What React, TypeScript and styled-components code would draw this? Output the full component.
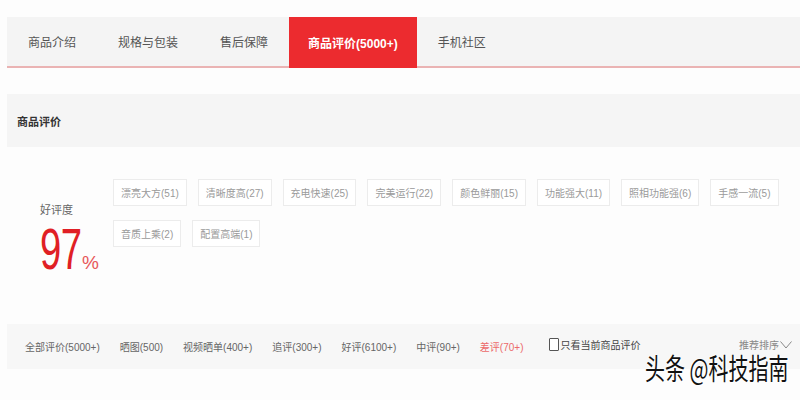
import React, { FC } from 'react';
import styled, { createGlobalStyle } from 'styled-components';

const GlobalStyle = createGlobalStyle`
  html, body {
    margin: 0;
    padding: 0;
    background: #fdfdfd;
    font-family: "Liberation Sans", "Noto Sans CJK SC", sans-serif;
    color: #666;
  }
`;

const tabs = ['商品介绍', '规格与包装', '售后保障', '商品评价(5000+)', '手机社区'];
const activeTab = 3;

const tags = [
  '漂亮大方(51)',
  '清晰度高(27)',
  '充电快速(25)',
  '完美运行(22)',
  '颜色鲜丽(15)',
  '功能强大(11)',
  '照相功能强(6)',
  '手感一流(5)',
  '音质上乘(2)',
  '配置高端(1)',
];

const filters = [
  { label: '全部评价(5000+)' },
  { label: '晒图(500)' },
  { label: '视频晒单(400+)' },
  { label: '追评(300+)' },
  { label: '好评(6100+)' },
  { label: '中评(90+)' },
  { label: '差评(70+)', bad: true },
];

const App: FC = () => (
  <Page>
    <GlobalStyle />
    <TabBar>
      {tabs.map((t, i) => (
        <Tab key={t} active={i === activeTab}>
          {t}
        </Tab>
      ))}
    </TabBar>

    <SectionHeader>商品评价</SectionHeader>

    <Summary>
      <Rate>
        <RateLabel>好评度</RateLabel>
        <RateValue>
          <Big>97</Big>
          <Percent>%</Percent>
        </RateValue>
      </Rate>
      <Tags>
        {tags.map((t) => (
          <TagItem key={t}>{t}</TagItem>
        ))}
      </Tags>
    </Summary>

    <FilterBar>
      {filters.map((f) => (
        <Filter key={f.label} bad={f.bad}>
          {f.label}
        </Filter>
      ))}
      <OnlyCurrent>
        <Box />
        只看当前商品评价
      </OnlyCurrent>
      <Sort>
        推荐排序
        <svg width="12" height="8" viewBox="0 0 12 8">
          <path d="M0.5 0.5 L6 7 L11.5 0.5" fill="none" stroke="#888" strokeWidth="1" />
        </svg>
      </Sort>
    </FilterBar>

    <Watermark>
      <WatermarkText>头条 @科技指南</WatermarkText>
    </Watermark>
  </Page>
);

export default App;

const Page = styled.div`
  position: relative;
  width: 800px;
  height: 400px;
  padding: 17px 0 0 7px;
  box-sizing: border-box;
  overflow: hidden;
`;

const TabBar = styled.div`
  display: flex;
  height: 49px;
  background: #f4f4f4;
  border-bottom: 2px solid #eab3b3;
`;

const Tab = styled.div<{ active?: boolean }>`
  display: flex;
  align-items: center;
  padding: 0 ${({ active }) => (active ? '19px' : '21px')};
  margin-bottom: ${({ active }) => (active ? '-2px' : '0')};
  font-size: 12px;
  font-weight: ${({ active }) => (active ? 700 : 400)};
  color: ${({ active }) => (active ? '#fff' : '#555')};
  background: ${({ active }) => (active ? '#ec2b2f' : 'transparent')};

  & + & {
    margin-left: 0;
  }
`;

const SectionHeader = styled.div`
  margin-top: 26px;
  height: 53px;
  display: flex;
  align-items: center;
  padding-left: 10px;
  background: #f5f5f5;
  font-size: 11px;
  font-weight: 700;
  color: #333;
`;

const Summary = styled.div`
  display: flex;
  height: 177px;
  padding-top: 32px;
  box-sizing: border-box;
`;

const Rate = styled.div`
  width: 106px;
  padding: 24px 0 0 33px;
  box-sizing: border-box;
`;

const RateLabel = styled.div`
  font-size: 11px;
  color: #666;
  line-height: 14px;
`;

const RateValue = styled.div`
  display: flex;
  align-items: baseline;
  height: 52px;
  margin-top: 4px;
`;

const Big = styled.span`
  display: inline-block;
  width: 42px;
  font-size: 58px;
  line-height: 56px;
  color: #e01f25;
  transform: scaleX(0.66);
  transform-origin: left;
  letter-spacing: -1px;
`;

const Percent = styled.span`
  font-size: 19px;
  color: #e4393c;
  opacity: 0.85;
`;

const Tags = styled.div`
  display: flex;
  flex-wrap: wrap;
  align-content: flex-start;
  width: 684px;
  column-gap: 11px;
  row-gap: 14px;
`;

const TagItem = styled.div`
  height: 27px;
  padding: 0 7px;
  display: flex;
  align-items: center;
  border: 1px solid #ececec;
  background: #fff;
  box-sizing: border-box;
  font-size: 10px;
  color: #9a9a9a;
`;

const FilterBar = styled.div`
  display: flex;
  align-items: center;
  height: 45px;
  padding: 0 8px 0 18px;
  background: #f7f7f7;
  font-size: 10px;
`;

const Filter = styled.div<{ bad?: boolean }>`
  margin-right: 20px;
  color: ${({ bad }) => (bad ? '#ec6a6a' : '#666')};
`;

const OnlyCurrent = styled.label`
  display: flex;
  align-items: center;
  gap: 1px;
  margin-left: 6px;
  color: #444;
  margin-top: -4px;
`;

const Box = styled.span`
  width: 8px;
  height: 11px;
  border: 1px solid #555;
  border-radius: 1px;
  background: #fff;
`;

const Sort = styled.div`
  margin-left: auto;
  display: flex;
  align-items: center;
  gap: 1px;
  color: #888;
  margin-top: -4px;
`;

const Watermark = styled.div`
  position: absolute;
  left: 645px;
  top: 352px;
`;

const WatermarkText = styled.span`
  display: inline-block;
  font-family: "Noto Sans CJK SC", sans-serif;
  font-size: 20px;
  line-height: 22px;
  white-space: nowrap;
  color: #111;
  transform: scaleY(1.45);
  transform-origin: top;
  text-shadow: 0 0 2px #fff, 0 0 2px #fff, 1px 1px 0 #fff;
`;
